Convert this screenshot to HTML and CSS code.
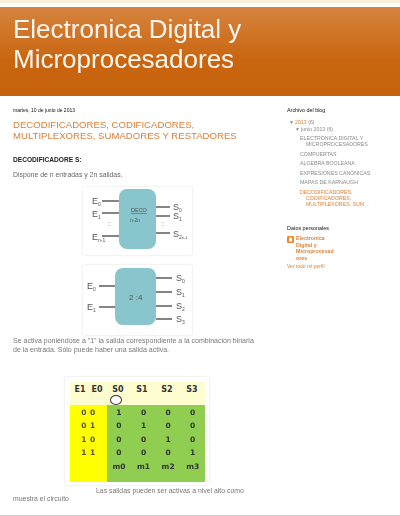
FILE: index.html

```html
<!DOCTYPE html>
<html lang="en">
<head>
    <meta charset="UTF-8">
    <title>Electronica Digital y Microprocesadores</title>
    <link rel="stylesheet" href="styles.css">
</head>
<body>
    <div class="topstrip"></div>
    <header class="blog-header">
        <h1>Electronica Digital y Microprocesadores</h1>
    </header>

    <div class="columns">
        <main class="post">
            <p class="post-date">martes, 10 de junio de 2013</p>
            <h2>DECODIFICADORES, CODIFICADORES, MULTIPLEXORES, SUMADORES Y RESTADORES</h2>
            <p class="section-title">DECODIFICADORE S:</p>
            <p class="intro">Dispone de n entradas y 2n salidas.</p>

            <div class="figure figure-one">
                <svg width="109" height="68" viewBox="0 0 109 68">
                    <rect x="36" y="2" width="37" height="60" rx="8" fill="#88c5cc"/>
                    <g stroke="#333" stroke-width="1.2">
                        <line x1="19" y1="14" x2="36" y2="14"/>
                        <line x1="19" y1="26" x2="36" y2="26"/>
                        <line x1="19" y1="49" x2="36" y2="49"/>
                        <line x1="73" y1="20" x2="87" y2="20"/>
                        <line x1="73" y1="29" x2="87" y2="29"/>
                        <line x1="73" y1="46" x2="87" y2="46"/>
                    </g>
                    <g class="fig-text" font-size="9">
                        <text x="9" y="17">E<tspan font-size="5" dy="2">0</tspan></text>
                        <text x="9" y="30">E<tspan font-size="5" dy="2">1</tspan></text>
                        <text x="9" y="53">E<tspan font-size="5" dy="2">n-1</tspan></text>
                        <text x="90" y="23">S<tspan font-size="5" dy="2">0</tspan></text>
                        <text x="90" y="32">S<tspan font-size="5" dy="2">1</tspan></text>
                        <text x="90" y="50">S<tspan font-size="5" dy="2">2</tspan><tspan font-size="4">n-1</tspan></text>
                    </g>
                    <text class="fig-text" x="48" y="25" font-size="5.5" text-decoration="underline">DECO</text>
                    <text class="fig-text" x="47" y="35" font-size="5">n-2n</text>
                    <g class="fig-text" font-size="7">
                        <text x="25" y="39">:</text>
                        <text x="79" y="39">:</text>
                    </g>
                </svg>
            </div>

            <div class="figure figure-two">
                <svg width="109" height="70" viewBox="0 0 109 70">
                    <rect x="32" y="3" width="41" height="57" rx="8" fill="#88c5cc"/>
                    <g stroke="#333" stroke-width="1.2">
                        <line x1="16" y1="21" x2="32" y2="21"/>
                        <line x1="16" y1="42" x2="32" y2="42"/>
                        <line x1="73" y1="13" x2="89" y2="13"/>
                        <line x1="73" y1="27" x2="89" y2="27"/>
                        <line x1="73" y1="41" x2="89" y2="41"/>
                        <line x1="73" y1="54" x2="89" y2="54"/>
                    </g>
                    <g class="fig-text" font-size="9">
                        <text x="4" y="24">E<tspan font-size="5" dy="2">0</tspan></text>
                        <text x="4" y="45">E<tspan font-size="5" dy="2">1</tspan></text>
                        <text x="93" y="16">S<tspan font-size="5" dy="2">0</tspan></text>
                        <text x="93" y="30">S<tspan font-size="5" dy="2">1</tspan></text>
                        <text x="93" y="44">S<tspan font-size="5" dy="2">2</tspan></text>
                        <text x="93" y="57">S<tspan font-size="5" dy="2">3</tspan></text>
                    </g>
                    <text class="fig-text" x="46" y="35" font-size="8">2 :4</text>
                </svg>
            </div>

            <p class="body-text activa">Se activa poniéndose a "1" la salida correspondiente a la combinación binaria de la entrada. Sólo puede haber una salida activa.</p>

            <div class="truth">
                <div class="truth-head">
                    <span>E1</span><span>E0</span><span>S0</span><span>S1</span><span>S2</span><span>S3</span>
                    <i class="ring"></i>
                </div>
                <div class="truth-body">
                    <div class="inputs">
                        <div>0 0</div><div>0 1</div><div>1 0</div><div>1 1</div>
                    </div>
                    <div class="outputs">
                        <span>1</span><span>0</span><span>0</span><span>0</span>
                        <span>0</span><span>1</span><span>0</span><span>0</span>
                        <span>0</span><span>0</span><span>1</span><span>0</span>
                        <span>0</span><span>0</span><span>0</span><span>1</span>
                        <span>m0</span><span>m1</span><span>m2</span><span>m3</span>
                    </div>
                </div>
            </div>

            <p class="body-text last"><span class="spacer"></span>Las salidas pueden ser activas a nivel alto como muestra el circuito</p>
        </main>

        <aside class="sidebar">
            <section class="widget">
                <h3>Archivo del blog</h3>
                <ul class="archive">
                    <li class="year"><span class="arrow">&#9660;</span><a class="orange">2013</a> (6)</li>
                    <li class="month"><span class="arrow">&#9660;</span>junio 2013 (6)</li>
                    <li class="entry">ELECTRONICA DIGITAL Y MICROPROCESADORES</li>
                    <li class="entry">COMPUERTAS</li>
                    <li class="entry">ALGEBRA BOOLEANA</li>
                    <li class="entry">EXPRESIONES CANONICAS</li>
                    <li class="entry">MAPAS DE KARNAUGH</li>
                    <li class="entry orange">DECODIFICADORES, CODIFICADORES, MULTIPLEXORES, SUM...</li>
                </ul>
            </section>
            <section class="widget profile">
                <h3>Datos personales</h3>
                <div class="profile-name">
                    <svg class="blogger" width="7" height="7" viewBox="0 0 7 7">
                        <rect width="7" height="7" rx="1" fill="#f08a2c"/>
                        <rect x="2" y="1.6" width="3" height="3.8" rx="1" fill="#fff"/>
                    </svg>
                    <a class="orange">Electronica Digital y Microprocesad ores</a>
                </div>
                <a class="orange profile-link">Ver todo mi perfil</a>
            </section>
        </aside>
    </div>
    <div class="bottom-line"></div>
</body>
</html>
```

FILE: styles.css

```css
html, body {
    margin: 0;
    padding: 0;
}
body {
    width: 400px;
    height: 516px;
    overflow: hidden;
    background-color: #fff;
    font-family: "Liberation Sans", Arial, sans-serif;
    color: #555;
    position: relative;
}
.topstrip {
    height: 3px;
    background-color: #f8efd9;
    margin-bottom: 4px;
}
.blog-header {
    height: 89px;
    box-sizing: border-box;
    padding: 7px 13px 0;
    background: linear-gradient(#d6843f, #c9650f 60%, #c8630d);
    filter: blur(0.5px);
}
h1 {
    margin: 0;
    width: 300px;
    font-size: 26px;
    line-height: 30px;
    font-weight: normal;
    color: #fbf6f0;
}
.columns {
    display: flex;
    filter: blur(0.6px);
}
.post {
    width: 273px;
    box-sizing: border-box;
    padding: 11px 13px 0;
}
.post-date {
    margin: 0;
    font-size: 5px;
    line-height: 7px;
    color: #111;
}
h2 {
    margin: 5px 0 0;
    font-size: 9.6px;
    line-height: 11px;
    font-weight: normal;
    color: #d9803a;
}
.section-title {
    margin: 15px 0 0;
    font-size: 6.6px;
    line-height: 8px;
    font-weight: bold;
    color: #222;
}
.intro {
    margin: 7px 0 0;
    font-size: 6.9px;
    line-height: 8px;
    color: #666;
}
.figure {
    width: 109px;
    background-color: #fff;
    box-shadow: 0 0 2px rgba(0, 0, 0, 0.15);
}
.figure svg {
    display: block;
}
.figure-one {
    height: 68px;
    margin: 8px 0 0 70px;
}
.figure-two {
    height: 70px;
    margin: 10px 0 0 70px;
}
.fig-text {
    font-family: "Liberation Sans", Arial, sans-serif;
    fill: #555;
}
.body-text {
    margin: 0;
    font-size: 6.9px;
    line-height: 8.5px;
    color: #777;
}
.activa {
    margin-top: 2px;
    font-size: 7px;
    max-width: 243px;
}
.truth {
    width: 144px;
    margin: 23px 0 0 52px;
    box-sizing: border-box;
    padding: 5px 4px 3px 5px;
    background-color: #fff;
    box-shadow: 0 0 2px rgba(0, 0, 0, 0.15);
    font-family: "DejaVu Sans", Verdana, sans-serif;
    font-weight: bold;
    font-size: 7.5px;
    color: #333;
}
.truth-head {
    position: relative;
    height: 23px;
    box-sizing: border-box;
    padding-top: 3px;
    background-color: #fdfdd0;
    display: grid;
    grid-template-columns: 20px 14px 28px 20px 30px 20px;
    text-align: center;
    font-size: 8px;
}
.ring {
    position: absolute;
    left: 40px;
    top: 13px;
    width: 10px;
    height: 8px;
    border: 1.3px solid #333;
    border-radius: 50%;
    background-color: #fff;
}
.truth-body {
    display: flex;
    height: 77px;
}
.inputs {
    width: 37px;
    padding-top: 1px;
    background-color: #ffff00;
    text-align: center;
    color: #554;
    word-spacing: 1px;
}
.inputs div {
    height: 13.4px;
    line-height: 13.4px;
}
.outputs {
    flex: 1;
    padding-top: 1px;
    background-color: #8fce50;
    display: grid;
    grid-template-columns: repeat(4, 24.6px);
    grid-auto-rows: 13.4px;
    line-height: 13.4px;
    text-align: center;
    align-content: start;
}
.last {
    margin-top: 2px;
    line-height: 8px;
}
.spacer {
    display: inline-block;
    width: 83px;
}
.sidebar {
    flex: 1;
    padding: 11px 0 0 14px;
}
h3 {
    margin: 0;
    font-size: 5.4px;
    line-height: 7px;
    font-weight: normal;
    color: #111;
}
.widget {
    width: 102px;
}
.archive {
    margin: 5px 0 0;
    padding: 0;
    list-style: none;
    font-size: 5.25px;
    line-height: 6px;
    color: #8a8a8a;
}
.arrow {
    display: inline-block;
    width: 6px;
    font-size: 5px;
    color: #888;
}
.year {
    padding-left: 2px;
}
.month {
    padding-left: 8px;
    margin-top: 1px;
}
.entry {
    margin-top: 3.5px;
    padding-left: 19px;
    text-indent: -6px;
}
.entry:nth-child(3) {
    margin-top: 3px;
}
.orange {
    color: #dc8237;
}
.profile {
    margin-top: 18px;
}
.profile-name {
    display: flex;
    gap: 2px;
    margin-top: 3.5px;
    width: 47px;
    font-size: 5.3px;
    line-height: 6.6px;
    font-weight: bold;
}
.blogger {
    flex: none;
    margin-top: 1px;
}
.profile-link {
    display: block;
    margin-top: 2px;
    font-size: 5px;
    line-height: 7px;
}
.bottom-line {
    position: absolute;
    left: 0;
    right: 0;
    bottom: 0;
    height: 1px;
    background-color: #ccc;
}
```
